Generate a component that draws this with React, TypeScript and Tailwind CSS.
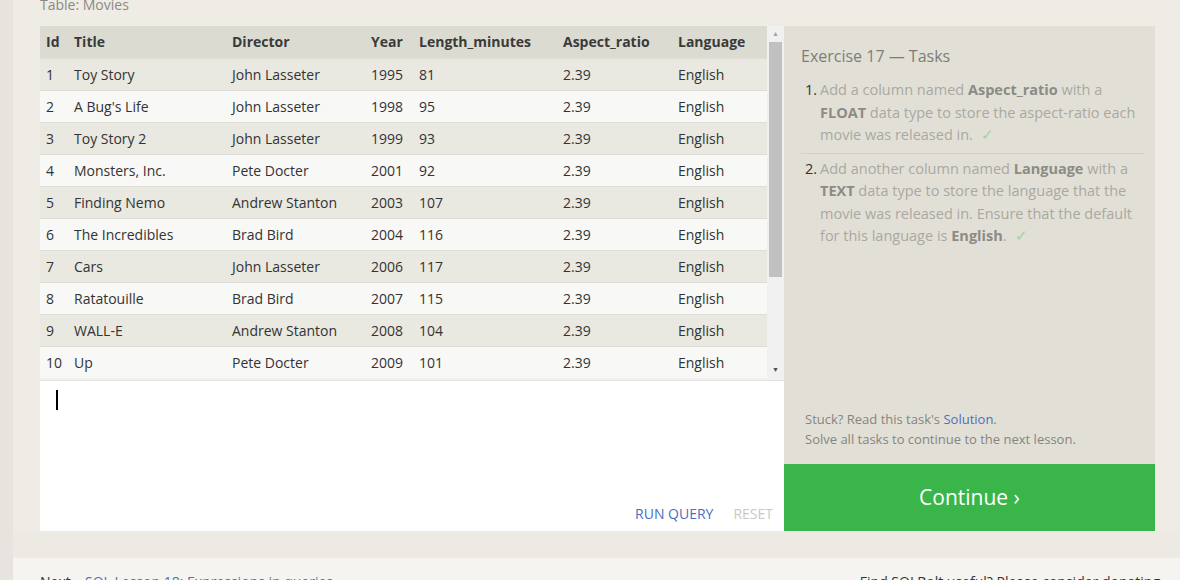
import React from 'react';

const movies = [
  [1, 'Toy Story', 'John Lasseter', 1995, 81],
  [2, "A Bug's Life", 'John Lasseter', 1998, 95],
  [3, 'Toy Story 2', 'John Lasseter', 1999, 93],
  [4, 'Monsters, Inc.', 'Pete Docter', 2001, 92],
  [5, 'Finding Nemo', 'Andrew Stanton', 2003, 107],
  [6, 'The Incredibles', 'Brad Bird', 2004, 116],
  [7, 'Cars', 'John Lasseter', 2006, 117],
  [8, 'Ratatouille', 'Brad Bird', 2007, 115],
  [9, 'WALL-E', 'Andrew Stanton', 2008, 104],
  [10, 'Up', 'Pete Docter', 2009, 101],
];

const Check = () => <span className="ml-2 text-[#9fd39f]">✓</span>;

export default function App() {
  return (
    <div className="flex h-[580px] w-[1180px] overflow-hidden bg-[#efece6] font-['Open_Sans',sans-serif] text-[#333]">
      {/* left gutter */}
      <div className="w-[13px] shrink-0 bg-[#e7e4e0]" />

      <div className="flex flex-1 flex-col">
        <div className="-mt-[5px] h-[31px] shrink-0 pl-[27px] text-[14px] leading-[20px] text-[#8a8a85]">Table: Movies</div>

        <div className="flex shrink-0 pl-[27px]">
          {/* table + editor */}
          <div className="flex w-[744px] flex-col">
            <div className="flex h-[354px] shrink-0 bg-[#f1f1f1]">
              <table className="w-[727px] table-fixed border-collapse self-start text-[14px]">
                <colgroup>
                  <col className="w-[34px]" />
                  <col className="w-[158px]" />
                  <col className="w-[139px]" />
                  <col className="w-[48px]" />
                  <col className="w-[144px]" />
                  <col className="w-[115px]" />
                  <col />
                </colgroup>
                <thead>
                  <tr className="h-[32px] bg-[#dcdbd2] text-left text-[#3a3a3a]">
                    <th className="pl-[6px] font-bold">Id</th>
                    <th className="font-bold">Title</th>
                    <th className="font-bold">Director</th>
                    <th className="font-bold">Year</th>
                    <th className="font-bold">Length_minutes</th>
                    <th className="font-bold">Aspect_ratio</th>
                    <th className="font-bold">Language</th>
                  </tr>
                </thead>
                <tbody>
                  {movies.map((m, i) => (
                    <tr
                      key={m[0]}
                      className={`h-[32px] border-t border-[#dfddd6] ${i % 2 === 0 ? 'bg-[#e9e8e1]' : 'bg-[#f8f8f6]'}`}
                    >
                      <td className="pl-[6px]">{m[0]}</td>
                      <td>{m[1]}</td>
                      <td>{m[2]}</td>
                      <td>{m[3]}</td>
                      <td>{m[4]}</td>
                      <td>2.39</td>
                      <td>English</td>
                    </tr>
                  ))}
                </tbody>
              </table>
              {/* scrollbar */}
              <div className="flex w-[17px] flex-col items-center bg-[#f1f1f1]">
                <div className="flex h-[16px] items-center justify-center text-[7px] text-[#a3a3a3]">▲</div>
                <div className="h-[235px] w-[13px] bg-[#c1c1c1]" />
                <div className="flex-1" />
                <div className="mb-[2px] flex h-[16px] items-center justify-center text-[7px] text-[#505050]">▼</div>
              </div>
            </div>

            <div className="flex h-[151px] shrink-0 flex-col border-t border-[#e4e2dc] bg-white">
              <div className="ml-[16px] mt-[9px] h-[20px] w-[2px] bg-black" />
              <div className="flex-1" />
              <div className="mb-[7px] flex justify-end gap-[20px] pr-[11px] text-[14px] uppercase">
                <span className="text-[#4a6fc0]">Run Query</span>
                <span className="text-[#c8c8c8]">Reset</span>
              </div>
            </div>
          </div>

          {/* tasks panel */}
          <div className="flex w-[371px] flex-col">
            <div className="flex h-[438px] shrink-0 flex-col bg-[#e2e0d6] pl-[17px] pr-[11px]">
              <div className="mt-[19px] text-[16px] leading-[22px] text-[#7d7d78]">Exercise 17 — Tasks</div>
              <ol className="mt-[12px] text-[14.5px] leading-[22.5px] text-[#a9a8a2]">
                <li className="flex border-b border-[#d2d0c6] pb-[6px]">
                  <span className="w-[19px] shrink-0 pl-[4px] text-[#333]">1.</span>
                  <span>
                    Add a column named <b className="text-[#8c8b86]">Aspect_ratio</b> with a{' '}
                    <b className="text-[#8c8b86]">FLOAT</b> data type to store the aspect-ratio each movie was released in.
                    <Check />
                  </span>
                </li>
                <li className="mt-[4px] flex">
                  <span className="w-[19px] shrink-0 pl-[4px] text-[#333]">2.</span>
                  <span>
                    Add another column named <b className="text-[#8c8b86]">Language</b> with a{' '}
                    <b className="text-[#8c8b86]">TEXT</b> data type to store the language that the movie was released in.
                    Ensure that the default for this language is <b className="text-[#8c8b86]">English</b>.
                    <Check />
                  </span>
                </li>
              </ol>
              <div className="flex-1" />
              <div className="mb-[15px] pl-[4px] text-[13px] leading-[20px] text-[#858580]">
                <div>
                  Stuck? Read this task's <span className="text-[#4a6fc0]">Solution</span>.
                </div>
                <div>Solve all tasks to continue to the next lesson.</div>
              </div>
            </div>
            <div className="flex h-[67px] shrink-0 items-center justify-center bg-[#3ab54a] text-[21px] text-white">
              Continue ›
            </div>
          </div>
        </div>

        <div className="h-[27px] shrink-0 bg-[#edeae3]" />
        <div className="flex flex-1 shrink-0 justify-between bg-[#f5f4f0] pl-[27px] pr-[20px] pt-[14px] text-[14px] leading-[20px]">
          <span className="text-[#333]">
            Next – <span className="text-[#4a6fc0]">SQL Lesson 18: Expressions in queries</span>
          </span>
          <span className="text-[#333]">Find SQLBolt useful? Please consider donating</span>
        </div>
      </div>
    </div>
  );
}
